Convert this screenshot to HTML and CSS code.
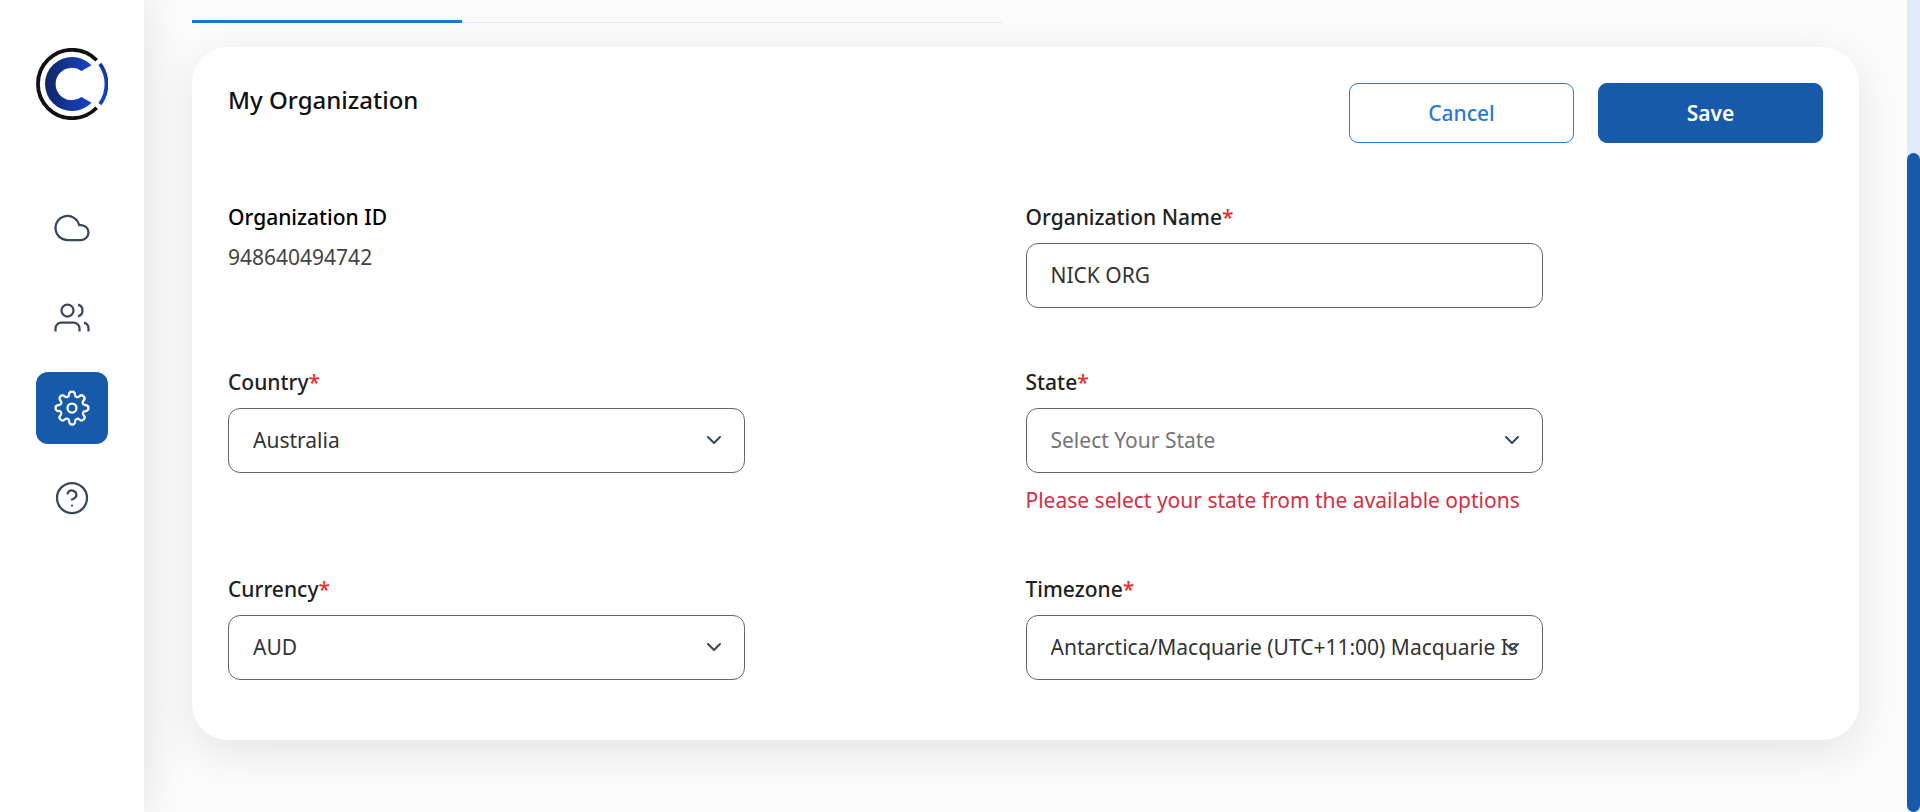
FILE: index.html
```html
<!DOCTYPE html>
<html lang="en">
<head>
<meta charset="utf-8">
<title>My Organization</title>
<link rel="stylesheet" href="styles.css">
</head>
<body>
<div class="app">
  <aside class="sidebar">
    <svg class="logo" viewBox="0 0 72 72" fill="none">
      <defs>
        <linearGradient id="brand" x1="9" y1="0" x2="55" y2="0" gradientUnits="userSpaceOnUse">
          <stop offset="0" stop-color="#102566"/><stop offset="1" stop-color="#1845c8"/>
        </linearGradient>
        <linearGradient id="arc" x1="0" y1="57" x2="0" y2="15" gradientUnits="userSpaceOnUse">
          <stop offset="0" stop-color="#1847c4"/><stop offset="1" stop-color="#14339a"/>
        </linearGradient>
      </defs>
      <path d="M60.7 12.2A34.2 34.2 0 1 0 60.7 59.8" stroke="#111" stroke-width="3.8"/>
      <path d="M63.9 15.8A34.2 34.2 0 0 1 63.9 56.2" stroke="url(#arc)" stroke-width="3.8"/>
      <path d="M55.5 17.3A27 27 0 1 0 55.5 54.7L45.5 49A16.2 16.2 0 1 1 45.5 23Z" fill="url(#brand)"/>
    </svg>
    <nav class="nav">
      <a class="nav-item"><svg class="icon" viewBox="0 0 24 24"><path d="M18 10h-1.26A8 8 0 1 0 9 20h9a5 5 0 0 0 0-10z"/></svg></a>
      <a class="nav-item"><svg class="icon" viewBox="0 0 24 24"><path d="M17 21v-2a4 4 0 0 0-4-4H5a4 4 0 0 0-4 4v2"/><circle cx="9" cy="7" r="4"/><path d="M23 21v-2a4 4 0 0 0-3-3.87"/><path d="M16 3.13a4 4 0 0 1 0 7.75"/></svg></a>
      <a class="nav-item active"><svg class="icon" viewBox="0 0 24 24"><circle cx="12" cy="12" r="3"/><path d="M19.4 15a1.65 1.65 0 0 0 .33 1.82l.06.06a2 2 0 0 1-2.83 2.83l-.06-.06a1.65 1.65 0 0 0-2.8 1.18V21a2 2 0 0 1-4 0v-.09a1.65 1.65 0 0 0-2.9-1.26l-.06.06a2 2 0 0 1-2.83-2.83l.06-.06A1.65 1.65 0 0 0 3.09 14H3a2 2 0 0 1 0-4h.09a1.65 1.65 0 0 0 1.26-2.88l-.06-.06a2 2 0 0 1 2.83-2.83l.06.06A1.65 1.65 0 0 0 10 3.09V3a2 2 0 0 1 4 0v.09a1.65 1.65 0 0 0 2.82 1.2l.06-.06a2 2 0 0 1 2.83 2.83l-.06.06A1.65 1.65 0 0 0 20.91 10H21a2 2 0 0 1 0 4h-.09a1.65 1.65 0 0 0-1.51 1z"/></svg></a>
      <a class="nav-item"><svg class="icon" viewBox="0 0 24 24"><circle cx="12" cy="12" r="10"/><path class="round" d="M9.09 9a3 3 0 0 1 5.83 1c0 2-3 3-3 3"/><path class="round" d="M12 17h.01"/></svg></a>
    </nav>
  </aside>
  <main class="main">
    <div class="tabs"><div class="tab">Organization</div></div>
    <section class="card">
      <header class="card-head">
        <h1 class="title">My Organization</h1>
        <div class="actions">
          <button class="btn btn-outline">Cancel</button>
          <button class="btn btn-primary">Save</button>
        </div>
      </header>
      <div class="form">
        <div class="field">
          <div class="label strong">Organization ID</div>
          <div class="value">948640494742</div>
        </div>
        <div class="field">
          <div class="label">Organization Name<span class="req">*</span></div>
          <div class="control"><span class="text">NICK ORG</span></div>
        </div>
        <div class="field">
          <div class="label">Country<span class="req">*</span></div>
          <div class="control"><span class="text">Australia</span><svg class="chevron" viewBox="0 0 24 24"><path d="M6 9l6 6 6-6"/></svg></div>
        </div>
        <div class="field">
          <div class="label">State<span class="req">*</span></div>
          <div class="control placeholder"><span class="text">Select Your State</span><svg class="chevron" viewBox="0 0 24 24"><path d="M6 9l6 6 6-6"/></svg></div>
          <div class="error">Please select your state from the available options</div>
        </div>
        <div class="field">
          <div class="label">Currency<span class="req">*</span></div>
          <div class="control"><span class="text">AUD</span><svg class="chevron" viewBox="0 0 24 24"><path d="M6 9l6 6 6-6"/></svg></div>
        </div>
        <div class="field">
          <div class="label">Timezone<span class="req">*</span></div>
          <div class="control"><span class="text">Antarctica/Macquarie (UTC+11:00) Macquarie Is</span><svg class="chevron" viewBox="0 0 24 24"><path d="M6 9l6 6 6-6"/></svg></div>
        </div>
      </div>
    </section>
  </main>
  <div class="scrollbar"><div class="thumb"></div></div>
</div>
</body>
</html>
```

FILE: styles.css
```css
* { box-sizing: border-box; }
body { margin: 0; font-family: "Noto Sans", sans-serif; font-size: 21px; line-height: 30px; color: #212121; -webkit-font-smoothing: antialiased; }
.app { display: flex; height: 812px; overflow: hidden; background: #fcfcfc; }

.sidebar { width: 144px; flex: none; background: #fff; box-shadow: 0 0 48px rgba(0, 0, 0, .12); padding-top: 48px; display: flex; flex-direction: column; align-items: center; }
.logo { width: 72px; height: 72px; flex: none; }
.nav { margin-top: 72px; display: flex; flex-direction: column; gap: 18px; }
.nav-item { width: 72px; height: 72px; border-radius: 12px; display: flex; align-items: center; justify-content: center; color: #3a465a; }
.nav-item.active { background: #175aa9; color: #fff; }
.icon { width: 36px; height: 36px; fill: none; stroke: currentColor; stroke-width: 1.5; stroke-linejoin: round; overflow: visible; }
.round { stroke-linecap: round; }

.main { flex: 1; min-width: 0; padding: 0 48px; overflow: hidden; }
.tabs { width: 810px; height: 23px; border-bottom: 1px solid #e2ebfa; display: flex; align-items: flex-end; }
.tab { width: 270px; height: 57px; flex: none; margin-bottom: -1px; border-bottom: 3px solid #1976d2; color: #1976d2; text-align: center; font-size: 24px; line-height: 36px; font-weight: 500; }

.card { margin-top: 24px; height: 693px; background: #fff; border-radius: 36px; padding: 36px; box-shadow: 0 12px 48px rgba(0, 0, 0, .1); }
.card-head { display: flex; justify-content: space-between; align-items: flex-start; height: 60px; }
.title { margin: 0; font-size: 24px; line-height: 34px; font-weight: 500; color: #111; }
.actions { display: flex; gap: 24px; }
.btn { width: 225px; height: 60px; border-radius: 9px; border: 1px solid #2a7ad4; font: 500 21px/30px "Noto Sans", sans-serif; padding: 0; }
.btn-outline { background: #fff; color: #2a7ad4; }
.btn-primary { background: #175aa9; border-color: #175aa9; color: #fff; font-weight: 600; }

.form { display: grid; grid-template-columns: 1fr 1fr; grid-template-rows: 165px 207px 77px; margin-top: 59px; }
.label { height: 41px; line-height: 30px; font-weight: 500; }
.strong { color: #000; }
.value { line-height: 30px; margin-top: -1px; color: #444; }
.req { color: #e53030; }
.control { position: relative; width: 517px; height: 65px; border: 1px solid #666; border-radius: 12px; padding: 0 24px 2px; display: flex; align-items: center; white-space: nowrap; color: #333; }
.placeholder { color: #757575; }
.text { flex: 1; overflow: hidden; }
.chevron { position: absolute; right: 18px; top: 19px; width: 24px; height: 24px; fill: none; stroke: #3a465a; stroke-width: 2; stroke-linecap: round; stroke-linejoin: round; }
.error { margin-top: 12px; color: #d32f45; }

.scrollbar { width: 13px; flex: none; background: #e2ebfa; padding-top: 153px; }
.thumb { height: 659px; border-radius: 7px; background: #175aa9; }
```
